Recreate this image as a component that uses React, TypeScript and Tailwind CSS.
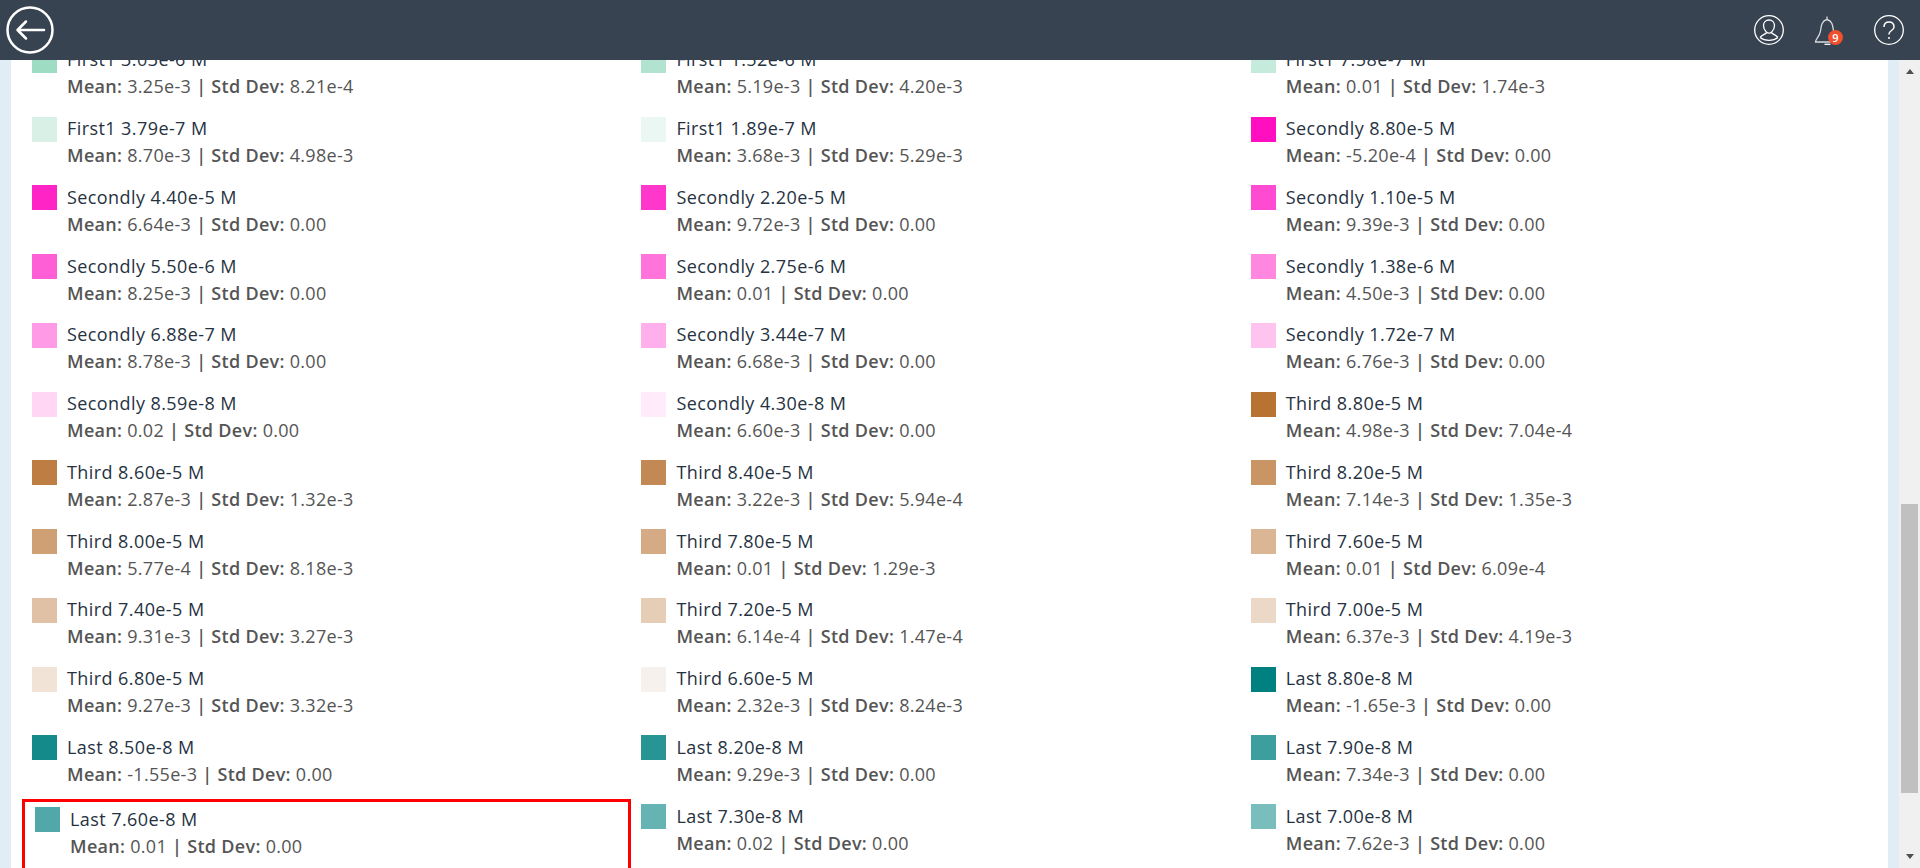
const font = "font-['Open_Sans',sans-serif]";

type Cell = { c: string; n: string; m: string; s: string; x?: boolean };

const rows: Cell[][] = [
  [
    { c: "bg-[#9fdcc4]", n: "First1 3.03e-6 M", m: "3.25e-3", s: "8.21e-4" },
    { c: "bg-[#b2e3d0]", n: "First1 1.52e-6 M", m: "5.19e-3", s: "4.20e-3" },
    { c: "bg-[#c4ebdc]", n: "First1 7.58e-7 M", m: "0.01", s: "1.74e-3" },
  ],
  [
    { c: "bg-[#d8f0e6]", n: "First1 3.79e-7 M", m: "8.70e-3", s: "4.98e-3" },
    { c: "bg-[#ebf7f2]", n: "First1 1.89e-7 M", m: "3.68e-3", s: "5.29e-3" },
    { c: "bg-[#ff0fc0]", n: "Secondly 8.80e-5 M", m: "-5.20e-4", s: "0.00" },
  ],
  [
    { c: "bg-[#ff24c6]", n: "Secondly 4.40e-5 M", m: "6.64e-3", s: "0.00" },
    { c: "bg-[#ff38cb]", n: "Secondly 2.20e-5 M", m: "9.72e-3", s: "0.00" },
    { c: "bg-[#ff4bd1]", n: "Secondly 1.10e-5 M", m: "9.39e-3", s: "0.00" },
  ],
  [
    { c: "bg-[#ff5fd6]", n: "Secondly 5.50e-6 M", m: "8.25e-3", s: "0.00" },
    { c: "bg-[#ff73db]", n: "Secondly 2.75e-6 M", m: "0.01", s: "0.00" },
    { c: "bg-[#ff87e0]", n: "Secondly 1.38e-6 M", m: "4.50e-3", s: "0.00" },
  ],
  [
    { c: "bg-[#ff9be6]", n: "Secondly 6.88e-7 M", m: "8.78e-3", s: "0.00" },
    { c: "bg-[#ffafeb]", n: "Secondly 3.44e-7 M", m: "6.68e-3", s: "0.00" },
    { c: "bg-[#ffc3f0]", n: "Secondly 1.72e-7 M", m: "6.76e-3", s: "0.00" },
  ],
  [
    { c: "bg-[#ffd7f5]", n: "Secondly 8.59e-8 M", m: "0.02", s: "0.00" },
    { c: "bg-[#ffebfa]", n: "Secondly 4.30e-8 M", m: "6.60e-3", s: "0.00" },
    { c: "bg-[#b87333]", n: "Third 8.80e-5 M", m: "4.98e-3", s: "7.04e-4" },
  ],
  [
    { c: "bg-[#be7e43]", n: "Third 8.60e-5 M", m: "2.87e-3", s: "1.32e-3" },
    { c: "bg-[#c38954]", n: "Third 8.40e-5 M", m: "3.22e-3", s: "5.94e-4" },
    { c: "bg-[#c99564]", n: "Third 8.20e-5 M", m: "7.14e-3", s: "1.35e-3" },
  ],
  [
    { c: "bg-[#cfa074]", n: "Third 8.00e-5 M", m: "5.77e-4", s: "8.18e-3" },
    { c: "bg-[#d4ab85]", n: "Third 7.80e-5 M", m: "0.01", s: "1.29e-3" },
    { c: "bg-[#dab695]", n: "Third 7.60e-5 M", m: "0.01", s: "6.09e-4" },
  ],
  [
    { c: "bg-[#e0c1a5]", n: "Third 7.40e-5 M", m: "9.31e-3", s: "3.27e-3" },
    { c: "bg-[#e5cdb6]", n: "Third 7.20e-5 M", m: "6.14e-4", s: "1.47e-4" },
    { c: "bg-[#ebd8c6]", n: "Third 7.00e-5 M", m: "6.37e-3", s: "4.19e-3" },
  ],
  [
    { c: "bg-[#f1e3d6]", n: "Third 6.80e-5 M", m: "9.27e-3", s: "3.32e-3" },
    { c: "bg-[#f6f1ec]", n: "Third 6.60e-5 M", m: "2.32e-3", s: "8.24e-3" },
    { c: "bg-[#008080]", n: "Last 8.80e-8 M", m: "-1.65e-3", s: "0.00" },
  ],
  [
    { c: "bg-[#148a8a]", n: "Last 8.50e-8 M", m: "-1.55e-3", s: "0.00" },
    { c: "bg-[#299494]", n: "Last 8.20e-8 M", m: "9.29e-3", s: "0.00" },
    { c: "bg-[#3d9e9e]", n: "Last 7.90e-8 M", m: "7.34e-3", s: "0.00" },
  ],
  [
    { c: "bg-[#52a8a8]", n: "Last 7.60e-8 M", m: "0.01", s: "0.00", x: true },
    { c: "bg-[#66b3b3]", n: "Last 7.30e-8 M", m: "0.02", s: "0.00" },
    { c: "bg-[#7abdbd]", n: "Last 7.00e-8 M", m: "7.62e-3", s: "0.00" },
  ],
];

function Item({ cell }: { cell: Cell }) {
  return (
    <div className="h-[68.75px] w-[609.4px] shrink-0">
      <div className={cell.x ? "-ml-[10px] -mt-[5px] flex h-[90px] w-[609px] items-start border-[3px] border-[#ff0000] pl-[10px] pt-[5px]" : "flex items-start"}>
        <div className={`h-[25px] w-[25px] shrink-0 ${cell.c}`} />
        <div className="ml-[10px] -mt-[1.500px]">
          <div className="text-[18px] leading-[27px] tracking-[0.42px] text-[#26323f]">{cell.n}</div>
          <div className="text-[18px] leading-[27px] tracking-[0.3px] text-[#555555]">
            <b className="font-semibold">Mean:</b> {cell.m} <b className="font-semibold">|</b> <b className="font-semibold">Std Dev:</b> {cell.s}
          </div>
        </div>
      </div>
    </div>
  );
}

export default function App() {
  return (
    <div className={`flex h-screen w-full flex-col overflow-hidden bg-[#e0edf5] ${font}`}>
      <header className="z-10 flex h-[60px] shrink-0 items-center justify-between bg-[#374350] pl-[6px] pr-[16px]">
        <svg width="48" height="48" viewBox="0 0 48 48" fill="none" stroke="#ffffff" strokeWidth="2.5" strokeLinecap="round" strokeLinejoin="round">
          <circle cx="24" cy="24" r="22.5" />
          <path d="M38 24H12M20 15.5L11.5 24L20 32.5" />
        </svg>
        <div className="flex items-center gap-[30px]">
          <svg width="30" height="30" viewBox="0 0 30 30" fill="none" stroke="#ffffff" strokeWidth="1.3">
            <circle cx="15" cy="15" r="14.3" />
            <path d="M15 5c-3.300 0-5.500 2.400-5.500 5.600 0 2.600 1.300 5 2.800 6.400v1c-1.500 1.400-4.500 2-6.300 4.500M15 5c3.300 0 5.500 2.400 5.500 5.600 0 2.600-1.300 5-2.800 6.400v1c1.500 1.400 4.500 2 6.300 4.500M12.300 17c1.600 1.400 3.800 1.400 5.400 0M6 22.500c2.500 2 6 2.800 9 2.800s6.500-.8 9-2.800" />
          </svg>
          <div className="relative h-[30px] w-[30px]">
            <svg width="30" height="30" viewBox="0 0 30 30" fill="none" stroke="#d8dbde" strokeWidth="1.3">
              <path d="M1.500 27c0-3 4-5 5-11 .7-5 1-10 6.500-11.500 5.500 1.500 5.800 6.500 6.500 11.500 1 6 4.500 8 5 11zM13 4.500V1.500" />
              <path d="M10.500 29.300h6" stroke="#ffffff" />
            </svg>
            <span className="absolute left-[14px] top-[15px] flex h-[15px] w-[15px] items-center justify-center rounded-full bg-[#f0502d] text-[11px] font-semibold leading-none text-white">9</span>
          </div>
          <svg width="30" height="30" viewBox="0 0 30 30" fill="none" stroke="#ffffff" strokeWidth="1.3">
            <circle cx="15" cy="15" r="14.3" />
            <path d="M10 12c0-3 2-5 5-5s5 2 5 5c0 3.500-5 3.500-5 7v.5" strokeWidth="1.500" />
            <circle cx="15" cy="23" r="1" fill="#ffffff" stroke="none" />
          </svg>
        </div>
      </header>
      <div className="flex min-h-0 flex-1">
        <main className="ml-[11px] mr-[11px] min-w-0 flex-1 overflow-hidden bg-white">
          <div className="-mt-[12.200px] pl-[21px]">
            {rows.map((row, i) => (
              <div key={i} className="flex">
                {row.map((cell, j) => (
                  <Item key={j} cell={cell} />
                ))}
              </div>
            ))}
          </div>
        </main>
        <div className="flex w-[21px] shrink-0 flex-col items-center bg-[#f0f0f0] pb-[9px]">
          <div className="mt-[9px] h-0 w-0 border-x-[4.500px] border-b-[5px] border-x-transparent border-b-[#505050]" />
          <div className="mt-[430px] h-[289px] w-[17px] bg-[#c0c0c0]" />
          <div className="mt-auto h-0 w-0 border-x-[4.500px] border-t-[5px] border-x-transparent border-t-[#505050]" />
        </div>
      </div>
    </div>
  );
}
